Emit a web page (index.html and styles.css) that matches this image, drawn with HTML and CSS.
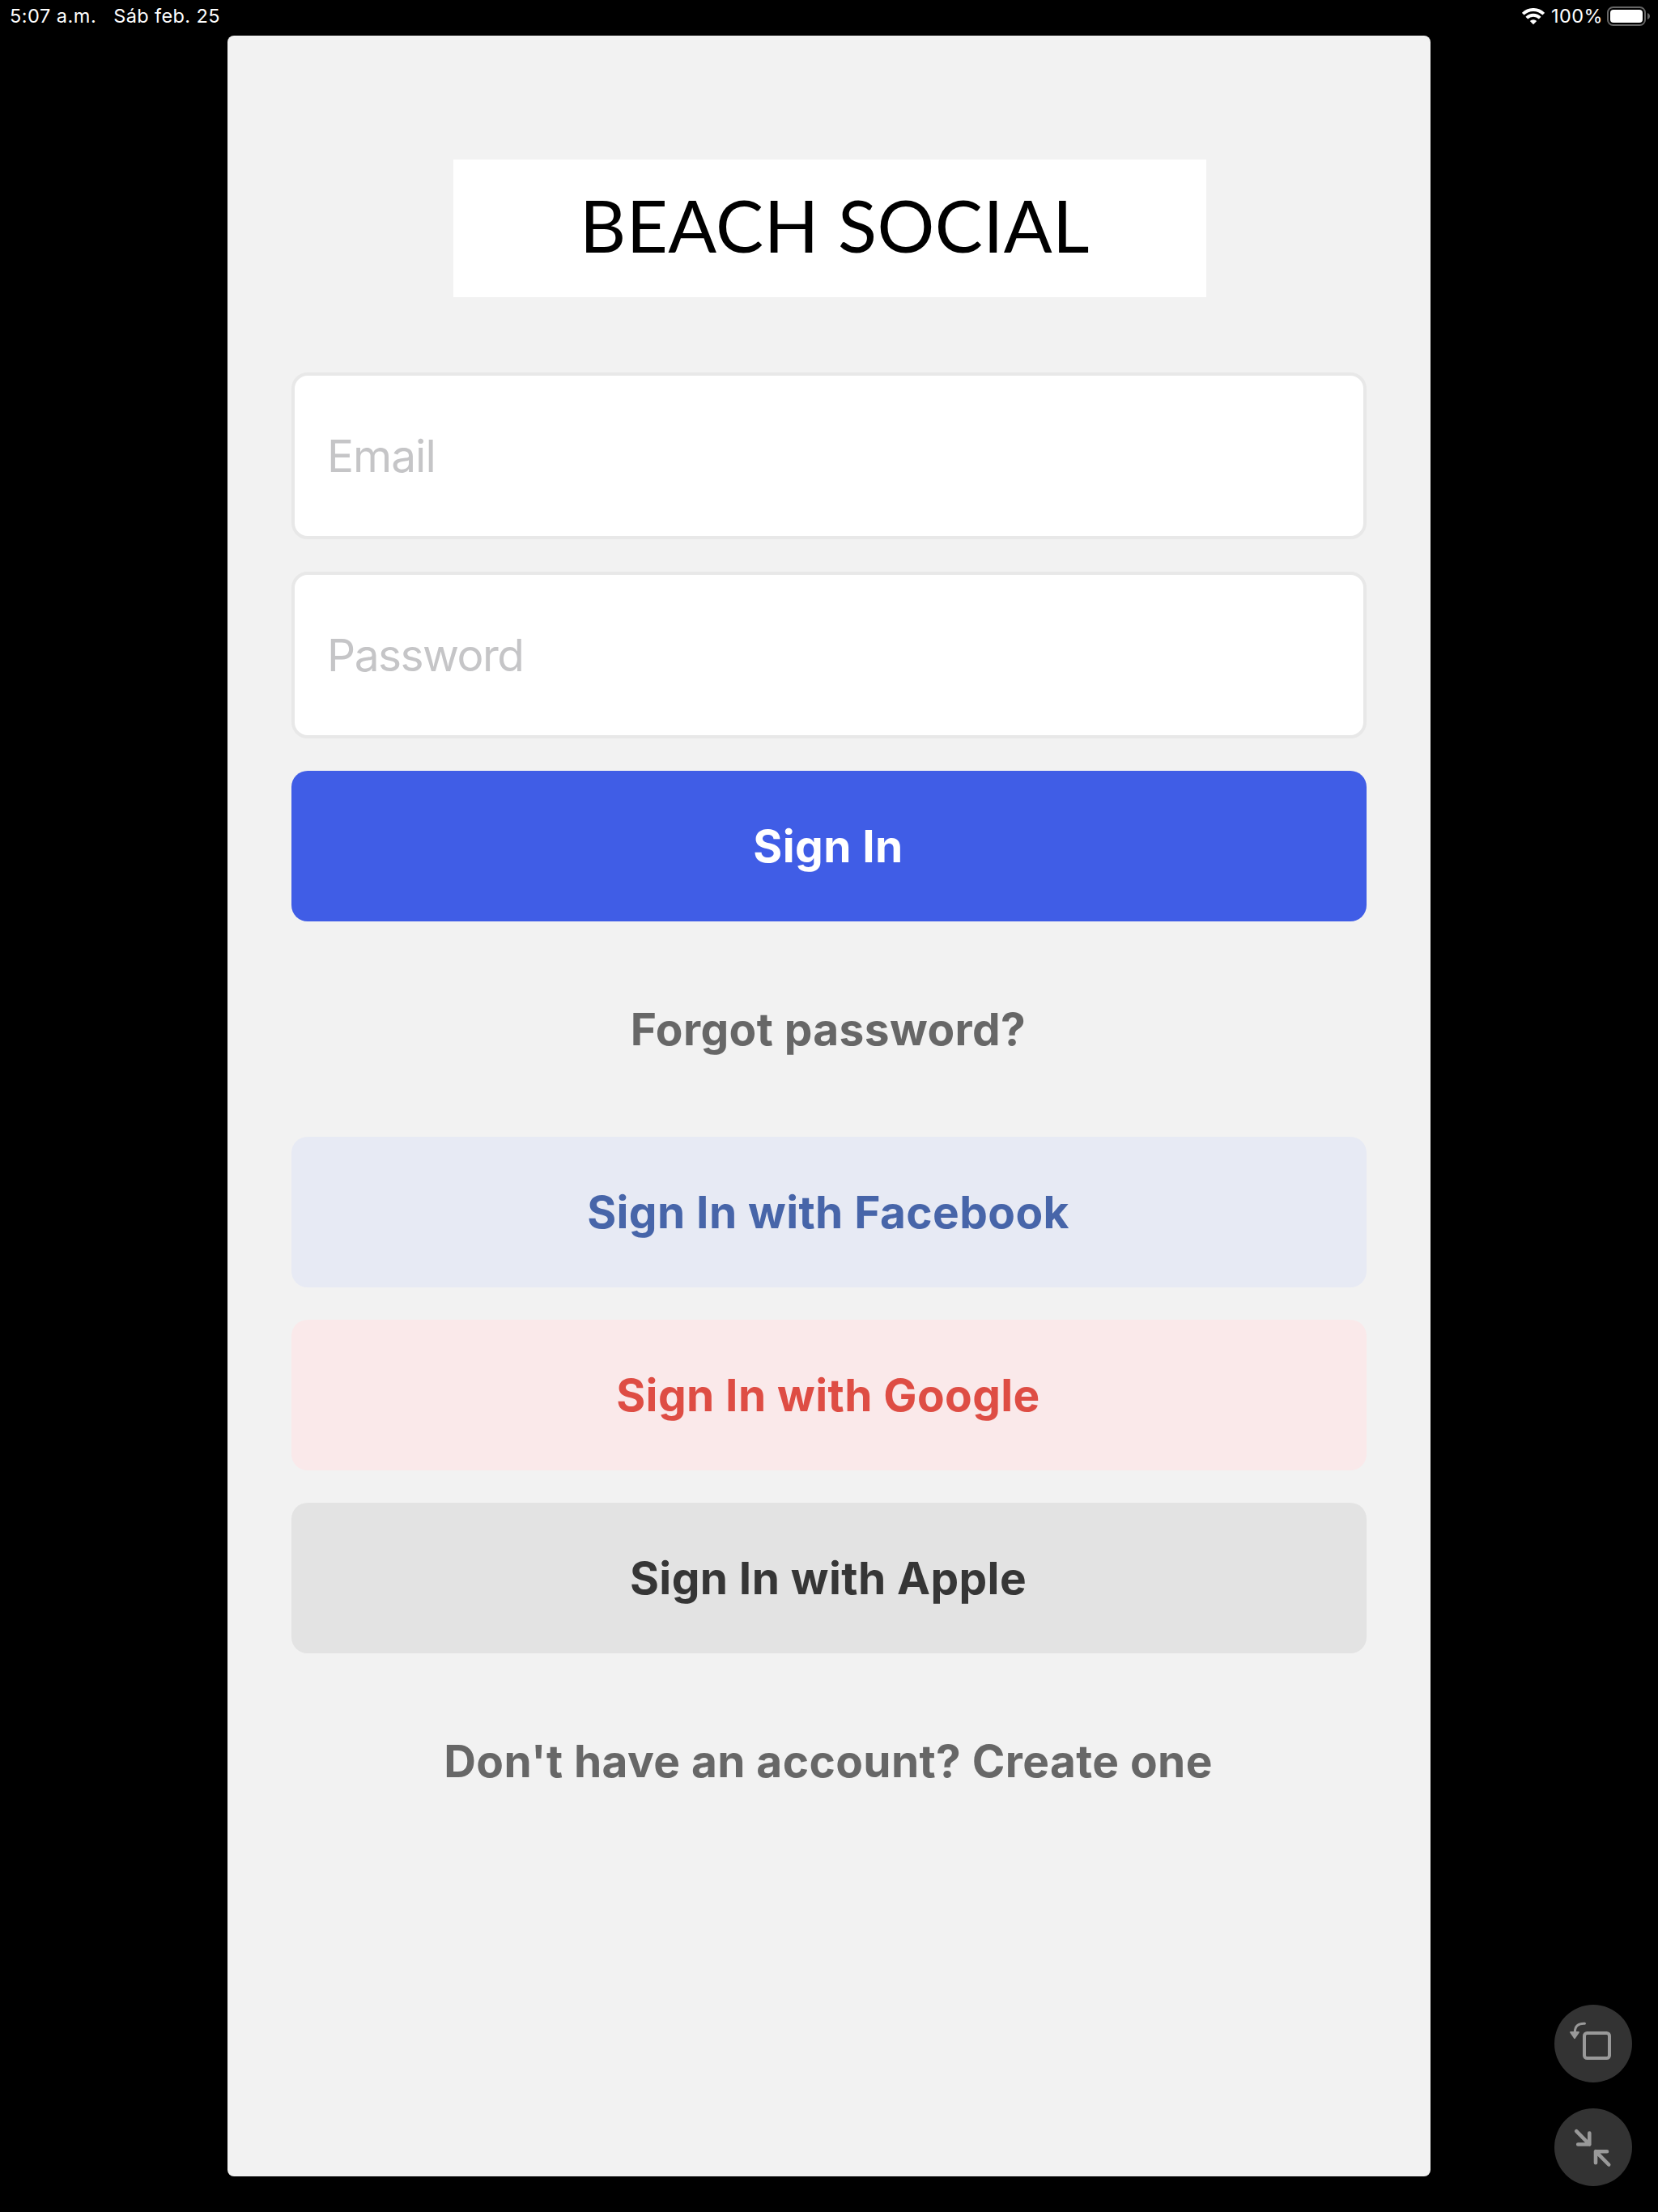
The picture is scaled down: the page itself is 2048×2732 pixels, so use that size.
FILE: index.html
```html
<!DOCTYPE html>
<html lang="es">
<head>
<meta charset="utf-8">
<title>Beach Social</title>
<link rel="stylesheet" href="styles.css">
</head>
<body>
<header class="status">
  <span class="time">5:07 a.m.</span>
  <span class="date">Sáb feb. 25</span>
  <svg class="wifi" width="28" height="21" viewBox="0 0 28 21">
    <path d="M1.2 7.2a18.2 18.2 0 0 1 25.6 0M5.8 12.2a11.6 11.6 0 0 1 16.4 0" fill="none" stroke="#fff" stroke-width="3.9"/>
    <path d="M14 20.2l4.2-4.2a6 6 0 0 0-8.4 0z" fill="#fff"/>
  </svg>
  <span class="percent">100%</span>
  <svg class="battery" width="54" height="24" viewBox="0 0 54 24">
    <rect x="1" y="1" width="46" height="22" rx="6.5" fill="none" stroke="#666" stroke-width="2"/>
    <rect x="4" y="4" width="40" height="16" rx="4" fill="#fff"/>
    <path d="M50 8q3 1.200 3 4t-3 4z" fill="#666"/>
  </svg>
</header>
<div class="stage">
  <main class="panel">
    <div class="logo"><span class="logo-text">BEACH SOCIAL</span></div>
    <form class="form">
      <input class="field email" type="email" placeholder="Email">
      <input class="field" type="password" placeholder="Password">
      <button class="btn primary" type="button">Sign In</button>
      <button class="btn link" type="button">Forgot password?</button>
      <button class="btn facebook" type="button">Sign In with Facebook</button>
      <button class="btn google" type="button">Sign In with Google</button>
      <button class="btn apple" type="button">Sign In with Apple</button>
      <button class="btn link" type="button">Don't have an account? Create one</button>
    </form>
  </main>
  <aside class="controls">
    <button class="round" type="button" aria-label="Rotate">
      <svg width="96" height="96" viewBox="0 0 96 96">
        <rect x="37" y="35" width="31" height="31" rx="3.500" fill="none" stroke="#999" stroke-width="4"/>
        <path d="M37.500 23.200C29.500 22.800 25.300 26.500 25.300 34" fill="none" stroke="#999" stroke-width="3" stroke-linecap="round"/>
        <path d="M20 34H30L25 41.200Z" fill="#999" stroke="#999" stroke-width="1.800" stroke-linejoin="round"/>
      </svg>
    </button>
    <button class="round" type="button" aria-label="Shrink">
      <svg width="96" height="96" viewBox="0 0 96 96" fill="none" stroke="#999" stroke-width="4.600" stroke-linecap="round" stroke-linejoin="round">
        <path d="M27.200 28.200L43.300 44.500M43.300 30.500V44.500H29.200"/>
        <path d="M67.200 69.500L51 53.200M51 67.200V53.200H65"/>
      </svg>
    </button>
  </aside>
</div>
</body>
</html>
```
FILE: styles.css
```css
* { box-sizing: border-box; }
body {
  margin: 0;
  width: 2048px;
  height: 2732px;
  background: #000;
  font-family: Inter, "Liberation Sans", sans-serif;
  display: flex;
  flex-direction: column;
  overflow: hidden;
}
.status {
  height: 44px;
  padding: 0 9px 4px 12px;
  display: flex;
  align-items: center;
  color: #fff;
  font-size: 23.5px;
  line-height: 28px;
  font-weight: 420;
  white-space: nowrap;
}
.status span { padding-bottom: 1px; }
.time { letter-spacing: 0.5px; }
.date { margin-left: 21px; letter-spacing: 0.4px; }
.wifi { margin-left: auto; }
.percent { margin: 0 5px 0 8px; letter-spacing: 0.4px; }
.stage {
  flex: 1;
  display: grid;
  grid-template-columns: 281px 1486px 281px;
}
.panel {
  grid-column: 2;
  height: 2644px;
  padding: 153px 79px 0;
  background: #f2f2f2;
  border-radius: 8px;
  display: flex;
  flex-direction: column;
}
.logo {
  width: 930px;
  height: 170px;
  margin-left: 200px;
  background: #fff;
  display: flex;
  align-items: center;
  padding: 0 0 8px 156px;
}
.logo-text {
  font-family: Lato, sans-serif;
  font-size: 88.5px;
  line-height: 100px;
  letter-spacing: 0.5px;
  color: #000;
  white-space: nowrap;
}
.form {
  margin-top: 93px;
  display: flex;
  flex-direction: column;
  gap: 40px;
}
.field {
  height: 206px;
  border: 4px solid #e8e8e8;
  border-radius: 20px;
  background: #fff;
  padding: 0 40px 1px;
  font: 430 55px Inter, sans-serif;
  letter-spacing: -1.5px;
}
.email { letter-spacing: -1px; }
.field::placeholder { color: #c5c5c7; opacity: 1; }
.btn {
  height: 186px;
  border: 0;
  border-radius: 20px;
  padding: 0 2px 1px 0;
  font: 700 55px Inter, sans-serif;
  letter-spacing: 0.4px;
  background: none;
}
.primary { background: #405de6; color: #fff; }
.link { color: #676767; }
.facebook { background: #e7eaf4; color: #4765a9; }
.google { background: #fae9ea; color: #de4d44; }
.apple { background: #e3e3e3; color: #363636; }
.controls {
  display: flex;
  flex-direction: column;
  justify-content: flex-end;
  align-items: flex-end;
  gap: 32px;
  padding: 0 32px 32px 0;
}
.round {
  width: 96px;
  height: 96px;
  border: 0;
  padding: 0;
  border-radius: 50%;
  background: #333;
}
.round svg { display: block; }
```
